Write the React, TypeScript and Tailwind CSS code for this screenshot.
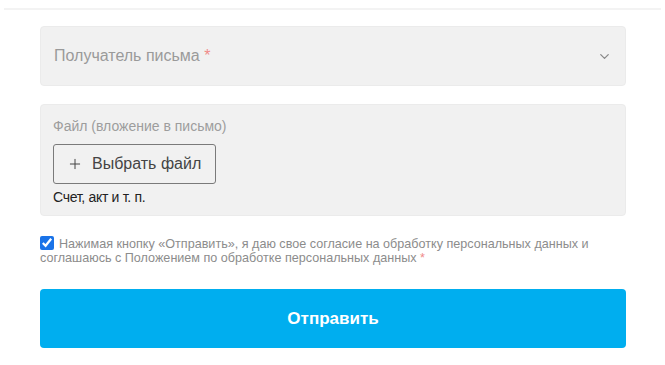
import React, { useState } from 'react';
import { ChevronDown, Plus } from 'lucide-react';

const App: React.FC = () => {
  const [agreed, setAgreed] = useState(true);

  return (
    <div className="w-[665px] h-[365px] bg-white font-['Liberation_Sans',Arial,sans-serif]">
      <div className="pt-[8px] px-[4px]">
        <div className="h-[2px] bg-[#f3f3f3]" />
      </div>

      <form className="mx-[40px] pt-[16px] w-[586px]" onSubmit={(e) => e.preventDefault()}>
        {/* Recipient select */}
        <div className="h-[60px] rounded-[4px] bg-[#f1f1f1] border border-[#ebebeb] flex items-center justify-between pl-[13px] pr-[13px]">
          <span className="text-[16px] text-[#9a9a9a]">
            Получатель письма <span className="text-[#f08a8a]">*</span>
          </span>
          <ChevronDown className="w-[15px] h-[15px] text-[#888]" strokeWidth={2} />
        </div>

        {/* File attachment */}
        <div className="mt-[18px] h-[112px] rounded-[4px] bg-[#f1f1f1] border border-[#ebebeb] px-[12px] pt-[13px]">
          <div className="text-[14px] leading-[16px] text-[#9d9d9d]">Файл (вложение в письмо)</div>
          <button
            type="button"
            className="mt-[10px] h-[40px] pl-[13px] pr-[14px] flex items-center gap-[9px] border border-[#7a7a7a] rounded-[3px] bg-[#f1f1f1] text-[16px] text-[#444]"
          >
            <Plus className="w-[16px] h-[16px]" strokeWidth={1.5} />
            Выбрать файл
          </button>
          <div className="mt-[5px] text-[14px] leading-[16px] tracking-[-0.3px] text-[#222]">Счет, акт и т. п.</div>
        </div>

        {/* Consent */}
        <div className="mt-[20px] text-[12.6px] leading-[14px] text-[#8c8c8c]">
          <label>
            <input
              type="checkbox"
              checked={agreed}
              onChange={(e) => setAgreed(e.target.checked)}
              className="w-[14px] h-[14px] mr-[5px] align-[-2px] accent-[#1a73e8]"
            />
            Нажимая кнопку «Отправить», я даю свое согласие на обработку персональных данных и соглашаюсь с Положением по обработке персональных данных <span className="text-[#f08a8a]">*</span>
          </label>
        </div>

        <button
          type="submit"
          className="mt-[24px] w-full h-[59px] rounded-[4px] bg-[#00aeef] text-white text-[17px] font-bold"
        >
          Отправить
        </button>
      </form>
    </div>
  );
};

export default App;
